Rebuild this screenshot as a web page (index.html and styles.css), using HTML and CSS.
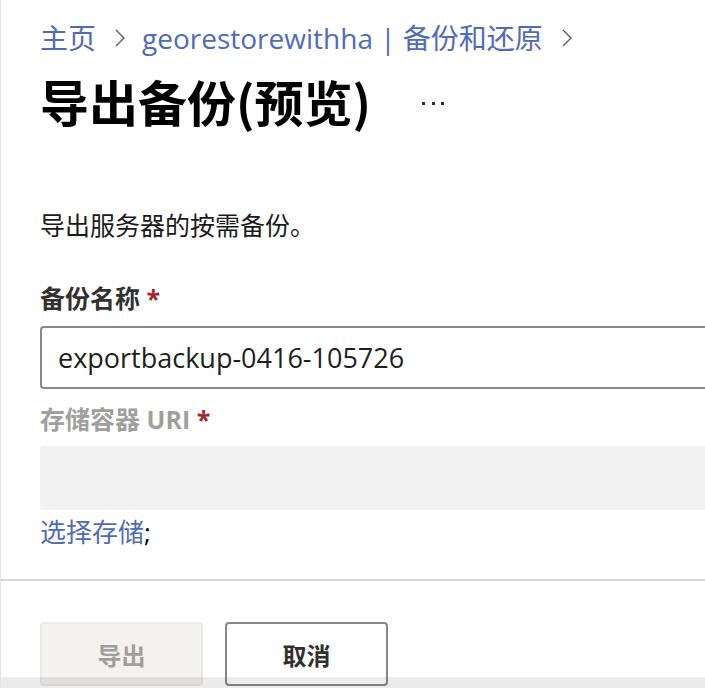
FILE: index.html
```html
<!DOCTYPE html>
<html lang="zh-CN">
<head>
    <meta charset="UTF-8">
    <title>导出备份(预览)</title>
    <link rel="stylesheet" href="styles.css">
</head>
<body>
    <div class="page">
        <div class="content">
            <nav class="breadcrumb">
                <a href="#">主页</a>
                <svg class="chevron" width="12" height="20" viewBox="0 0 12 20"><polyline points="2,2 10,10 2,18" fill="none" stroke="#605e5c" stroke-width="1.4"/></svg>
                <a href="#">georestorewithha | 备份和还原</a>
                <svg class="chevron" width="12" height="20" viewBox="0 0 12 20"><polyline points="2,2 10,10 2,18" fill="none" stroke="#605e5c" stroke-width="1.4"/></svg>
            </nav>

            <div class="title-row">
                <h1>导出备份(预览)</h1>
                <svg class="more" width="24" height="6" viewBox="0 0 24 6">
                    <rect x="1" y="1" width="3" height="3" fill="#323130"/>
                    <rect x="11" y="1" width="3" height="3" fill="#323130"/>
                    <rect x="20" y="1" width="3" height="3" fill="#323130"/>
                </svg>
            </div>

            <p class="description">导出服务器的按需备份。</p>

            <label class="field-label">备份名称 <span class="required">*</span></label>
            <div class="text-field">exportbackup-0416-105726</div>

            <label class="field-label disabled">存储容器 URI <span class="required">*</span></label>
            <div class="text-field is-disabled"></div>

            <p class="link-line"><a href="#">选择存储</a>;</p>
        </div>

        <div class="footer">
            <button class="btn btn-primary" disabled>导出</button>
            <button class="btn btn-default">取消</button>
        </div>

        <div class="scroll-band"></div>
    </div>
</body>
</html>
```

FILE: styles.css
```css
* {
    margin: 0;
    padding: 0;
    box-sizing: border-box;
}

html, body {
    height: 100%;
    overflow: hidden;
}

body {
    font-family: 'Open Sans', 'Noto Sans CJK SC', sans-serif;
    color: #1b1a19;
    background: #fff;
}

.page {
    position: relative;
    height: 100%;
    border-left: 1px solid #e4e4e4;
}

.content {
    padding: 19px 0 0 39px;
}

/* Breadcrumb */
.breadcrumb {
    display: flex;
    align-items: center;
    height: 38px;
    font-size: 28px;
    line-height: 38px;
}

.breadcrumb a {
    color: #4f6bb9;
    text-decoration: none;
}

.chevron {
    margin: 0 16px 0 18px;
}

/* Title */
.title-row {
    display: flex;
    align-items: center;
    margin-top: 16px;
    height: 56px;
}

h1 {
    font-size: 49px;
    line-height: 56px;
    font-weight: 700;
    color: #000;
    font-family: 'Noto Sans CJK SC', sans-serif;
}

.more {
    margin-left: 50px;
    margin-top: 6px;
}

.description {
    margin-top: 79px;
    font-size: 25px;
    line-height: 32px;
    color: #1b1a19;
    font-family: 'Noto Sans CJK SC', sans-serif;
}

/* Fields */
.field-label {
    display: block;
    margin-top: 42px;
    font-size: 25px;
    line-height: 32px;
    font-weight: 700;
    color: #323130;
}

.field-label.disabled {
    margin-top: 14px;
    color: #a19f9d;
}

.required {
    color: #a4262c;
}

.text-field {
    margin-top: 12px;
    width: 720px;
    height: 63px;
    padding-left: 16px;
    border: 2px solid #8a8886;
    border-radius: 4px;
    font-size: 27px;
    line-height: 59px;
    color: #201f1e;
}

.text-field.is-disabled {
    margin-top: 11px;
    height: 64px;
    border: none;
    background: #f2f2f2;
}

.link-line {
    margin-top: 6px;
    font-size: 26px;
    line-height: 32px;
    color: #000;
}

.link-line a {
    color: #4f6bb9;
    text-decoration: none;
}

/* Footer */
.footer {
    margin-top: 31px;
    border-top: 2px solid #d6d6d6;
    padding: 41px 0 0 39px;
    display: flex;
    gap: 22px;
}

.btn {
    height: 64px;
    font-size: 24px;
    font-family: 'Noto Sans CJK SC', sans-serif;
    border-radius: 4px;
    cursor: pointer;
}

.btn-primary {
    width: 163px;
    background: #f3f2f1;
    border: 2px solid #ebe9e8;
    color: #a19f9d;
    font-weight: 700;
}

.btn-default {
    width: 163px;
    background: #fff;
    border: 2px solid #8a8886;
    color: #323130;
    font-weight: 700;
}

.scroll-band {
    position: absolute;
    left: 0;
    right: 0;
    bottom: 0;
    height: 11px;
    background: rgba(0, 0, 0, 0.08);
}
```
